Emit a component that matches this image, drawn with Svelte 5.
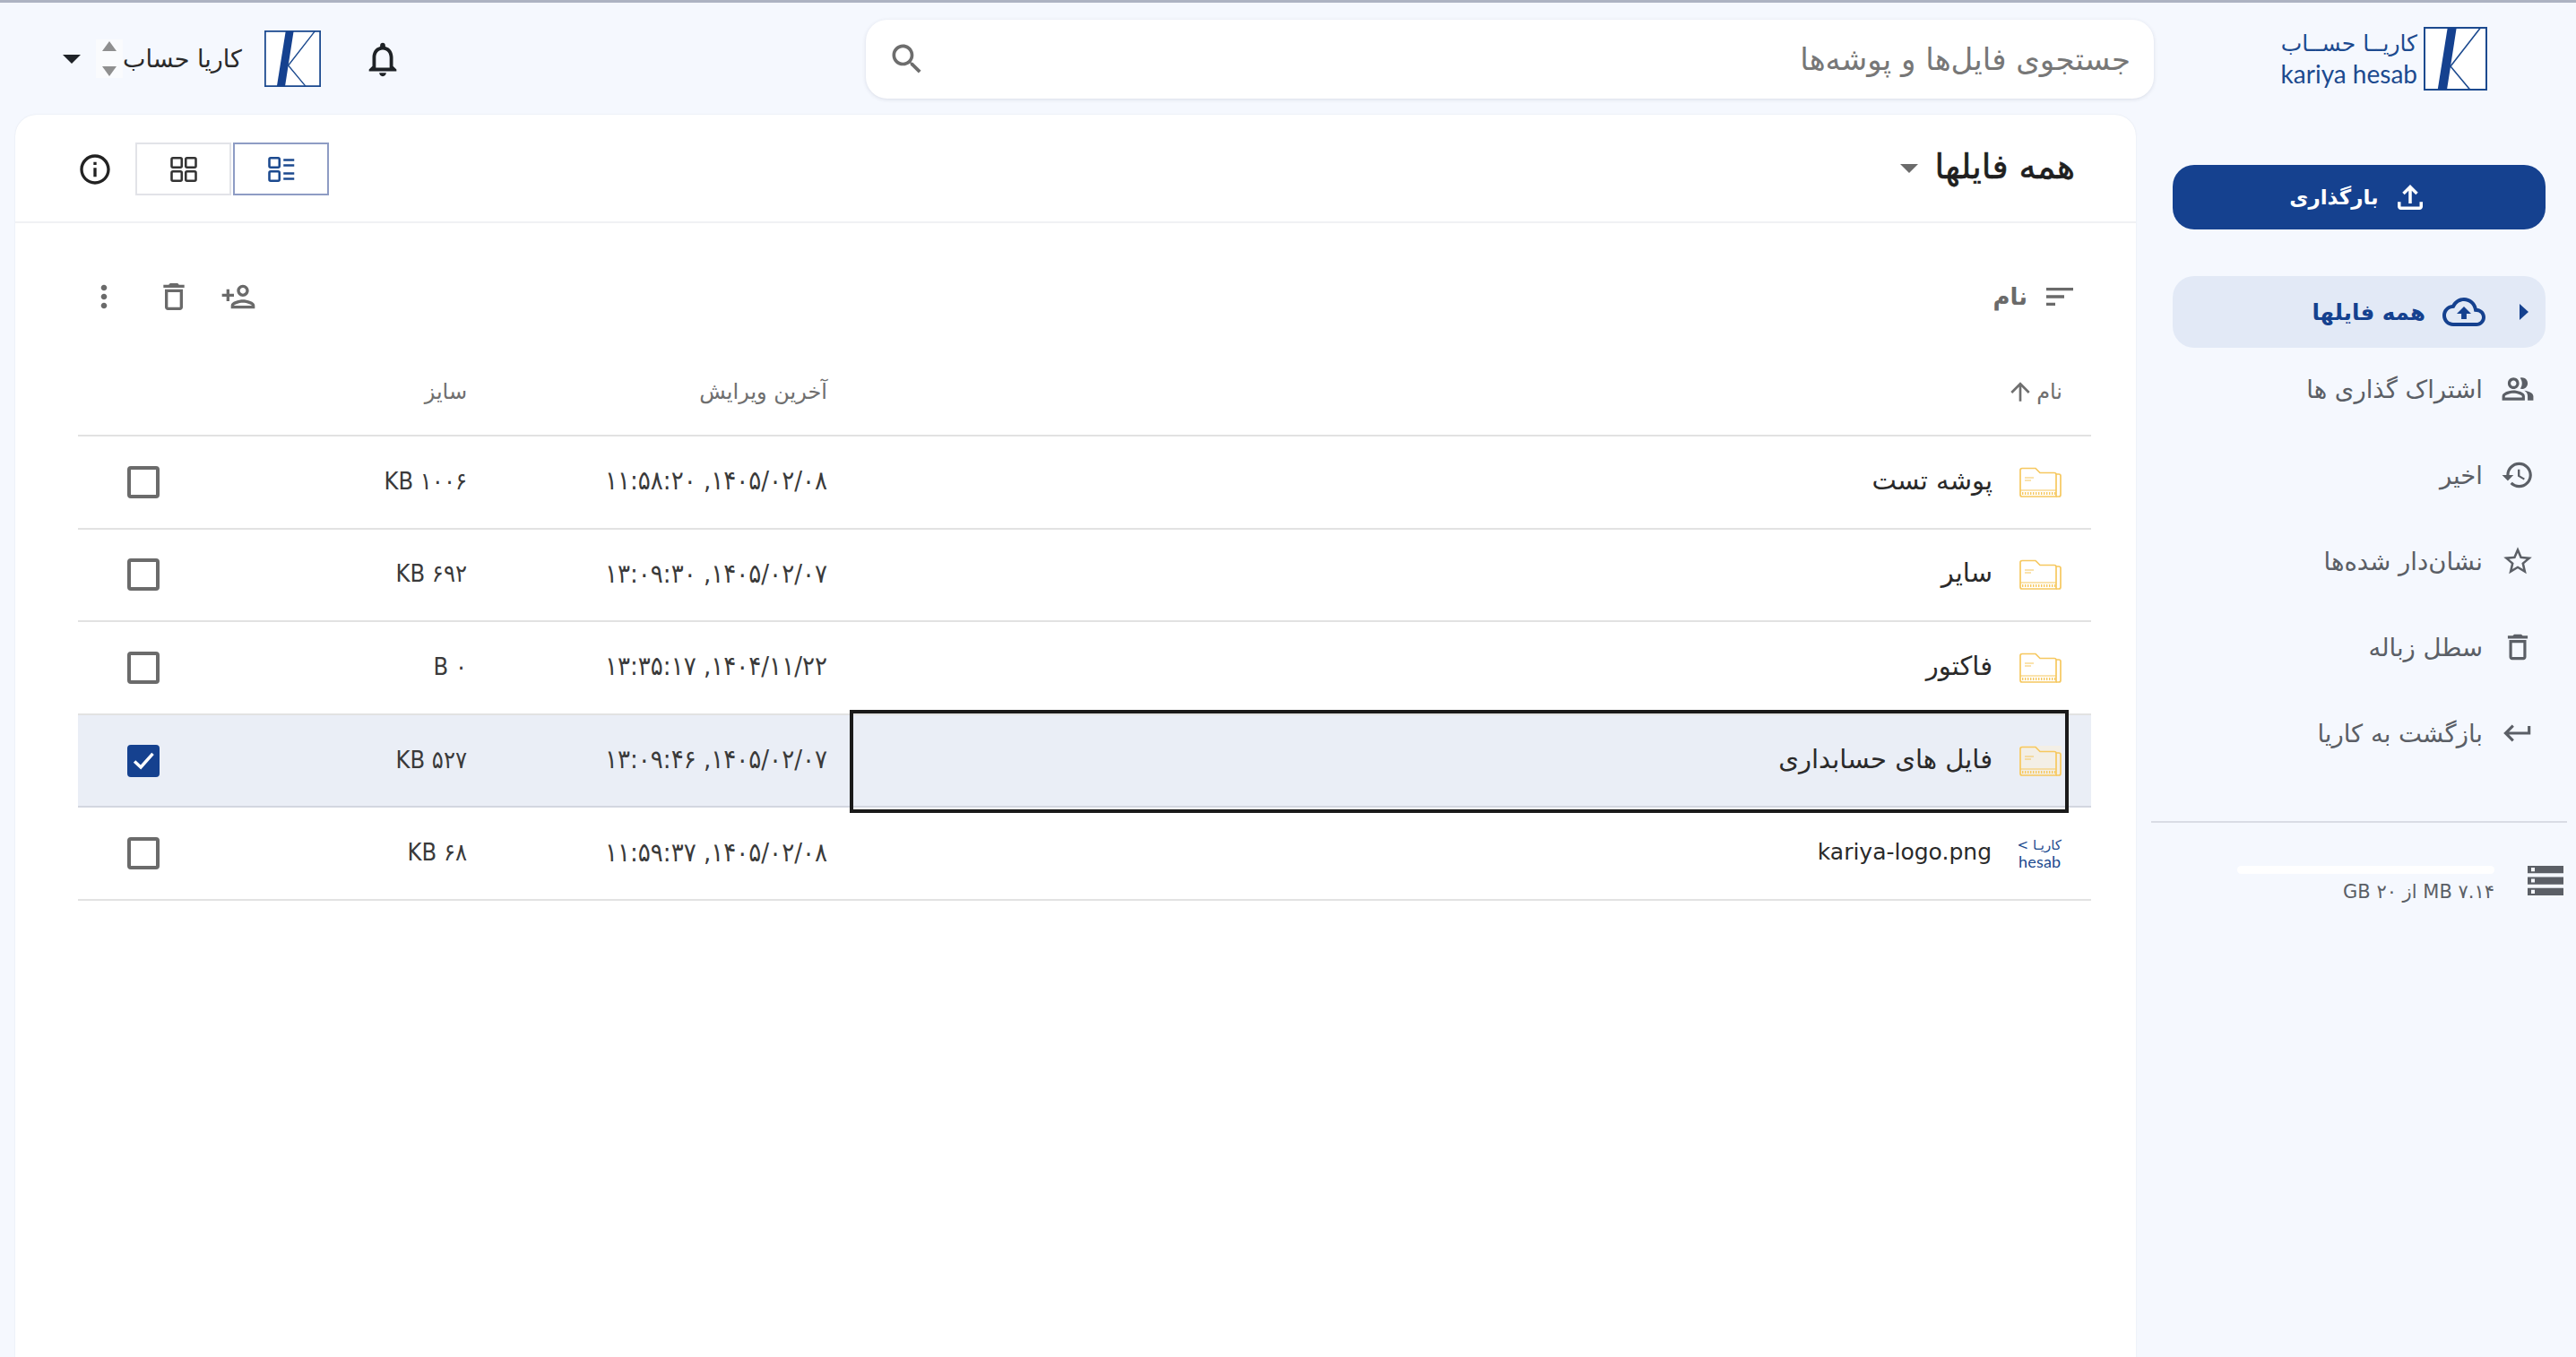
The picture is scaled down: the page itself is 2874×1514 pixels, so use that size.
<script>
  // material icon paths
  const icons = {
    upload: "M18 15v3H6v-3H4v3c0 1.1.9 2 2 2h12c1.1 0 2-.9 2-2v-3h-2zM7 9l1.41 1.41L11 7.83V16h2V7.83l2.59 2.58L17 9l-5-5-5 5z",
    cloud: "M19.35 10.04C18.67 6.59 15.64 4 12 4 9.11 4 6.6 5.64 5.35 8.04 2.34 8.36 0 10.91 0 14c0 3.31 2.69 6 6 6h13c2.76 0 5-2.24 5-5 0-2.64-2.05-4.78-4.65-4.96zM19 18H6c-2.21 0-4-1.79-4-4 0-2.05 1.53-3.76 3.56-3.97l1.07-.11.5-.95C8.08 7.14 9.94 6 12 6c2.62 0 4.88 1.86 5.39 4.43l.3 1.5 1.53.11c1.56.1 2.78 1.41 2.78 2.96 0 1.65-1.35 3-3 3zM8 13h2.55v3h2.9v-3H16l-4-4z",
    people: "M16.67 13.13C18.04 14.06 19 15.32 19 17v3h4v-3c0-2.18-3.57-3.47-6.33-3.87zM15 12c2.21 0 4-1.79 4-4s-1.79-4-4-4c-.47 0-.91.1-1.33.24C14.5 5.27 15 6.58 15 8s-.5 2.73-1.33 3.76c.42.14.86.24 1.33.24zM9 12c2.21 0 4-1.79 4-4s-1.79-4-4-4-4 1.79-4 4 1.79 4 4 4zm0-6c1.1 0 2 .9 2 2s-.9 2-2 2-2-.9-2-2 .9-2 2-2zM9 13c-2.67 0-8 1.34-8 4v3h16v-3c0-2.66-5.33-4-8-4zm6 5H3v-.99C3.2 16.29 6.3 15 9 15s5.8 1.29 6 2v1z",
    history: "M13 3c-4.97 0-9 4.03-9 9H1l3.89 3.89.07.14L9 12H6c0-3.87 3.13-7 7-7s7 3.13 7 7-3.13 7-7 7c-1.93 0-3.68-.79-4.94-2.06l-1.42 1.42C8.27 19.99 10.51 21 13 21c4.97 0 9-4.03 9-9s-4.03-9-9-9zm-1 5v5l4.28 2.54.72-1.21-3.5-2.08V8H12z",
    star: "M22 9.24l-7.19-.62L12 2 9.19 8.63 2 9.24l5.46 4.73L5.82 21 12 17.27 18.18 21l-1.63-7.03L22 9.24zM12 15.4l-3.76 2.27 1-4.28-3.32-2.88 4.38-.38L12 6.1l1.71 4.04 4.38.38-3.32 2.88 1 4.28L12 15.4z",
    trash: "M6 19c0 1.1.9 2 2 2h8c1.1 0 2-.9 2-2V7H6v12zM8 9h8v10H8V9zm7.5-5l-1-1h-5l-1 1H5v2h14V4h-3.5z",
    back: "M19 7v4H5.83l3.58-3.59L8 6l-6 6 6 6 1.41-1.41L5.83 13H21V7z",
    storage: "M2 20h20v-4H2v4zm2-3h2v2H4v-2zM2 4v4h20V4H2zm4 3H4V5h2v2zm-4 7h20v-4H2v4zm2-3h2v2H4v-2z",
    bell: "M12 22c1.1 0 2-.9 2-2h-4c0 1.1.9 2 2 2zm6-6v-5c0-3.07-1.63-5.64-4.5-6.32V4c0-.83-.67-1.5-1.5-1.5s-1.5.67-1.5 1.5v.68C7.64 5.36 6 7.92 6 11v5l-2 2v1h16v-1l-2-2zm-2 1H8v-6c0-2.48 1.51-4.5 4-4.5s4 2.02 4 4.5v6z",
    search: "M15.5 14h-.79l-.28-.27C15.41 12.59 16 11.11 16 9.5 16 5.91 13.09 3 9.5 3S3 5.91 3 9.5 5.91 16 9.5 16c1.61 0 3.09-.59 4.23-1.57l.27.28v.79l5 4.99L20.49 19l-4.99-5zm-6 0C7.01 14 5 11.99 5 9.5S7.01 5 9.5 5 14 7.01 14 9.5 11.99 14 9.5 14z",
    info: "M11 7h2v2h-2zm0 4h2v6h-2zm1-9C6.48 2 2 6.48 2 12s4.48 10 10 10 10-4.48 10-10S17.52 2 12 2zm0 18c-4.41 0-8-3.59-8-8s3.59-8 8-8 8 3.59 8 8-3.59 8-8 8z",
    personAdd: "M15 12c2.21 0 4-1.79 4-4s-1.79-4-4-4-4 1.79-4 4 1.79 4 4 4zm0-6c1.1 0 2 .9 2 2s-.9 2-2 2-2-.9-2-2 .9-2 2-2zm0 8c-2.67 0-8 1.34-8 4v2h16v-2c0-2.66-5.33-4-8-4zm-6 4c.22-.72 3.31-2 6-2 2.7 0 5.8 1.29 6 2H9zm-3-3v-3h3v-2H6V7H4v3H1v2h3v3z",
    more: "M12 8c1.1 0 2-.9 2-2s-.9-2-2-2-2 .9-2 2 .9 2 2 2zm0 2c-1.1 0-2 .9-2 2s.9 2 2 2 2-.9 2-2-.9-2-2-2zm0 6c-1.1 0-2 .9-2 2s.9 2 2 2 2-.9 2-2-.9-2-2-2z",
    arrowUp: "M4 12l1.41 1.41L11 7.83V20h2V7.83l5.58 5.59L20 12l-8-8-8 8z",
    sort: "M3 6v2h18V6H3zm0 7h12v-2H3v2zm0 5h6v-2H3v2z"
  };

  const navItems = [
    { label: "اشتراک گذاری ها", icon: "people" },
    { label: "اخیر", icon: "history" },
    { label: "نشان‌دار شده‌ها", icon: "star" },
    { label: "سطل زباله", icon: "trash" },
    { label: "بازگشت به کاریا", icon: "back" }
  ];

  const files = [
    { name: "پوشه تست", date: "۱۴۰۵/۰۲/۰۸, ۱۱:۵۸:۲۰", size: "۱۰۰۶ KB" },
    { name: "سایر", date: "۱۴۰۵/۰۲/۰۷, ۱۳:۰۹:۳۰", size: "۶۹۲ KB" },
    { name: "فاکتور", date: "۱۴۰۴/۱۱/۲۲, ۱۳:۳۵:۱۷", size: "۰ B" },
    { name: "فایل های حسابداری", date: "۱۴۰۵/۰۲/۰۷, ۱۳:۰۹:۴۶", size: "۵۲۷ KB", selected: true },
    { name: "kariya-logo.png", date: "۱۴۰۵/۰۲/۰۸, ۱۱:۵۹:۳۷", size: "۶۸ KB", image: true }
  ];
</script>

{#snippet icon(name, size, cls = "")}
  <svg class={cls} width={size} height={size} viewBox="0 0 24 24" fill="currentColor" aria-hidden="true"><path d={icons[name]} /></svg>
{/snippet}

{#snippet logoMark()}
  <svg class="mark" viewBox="0 0 71 71" aria-hidden="true">
    <rect x="1" y="1" width="69" height="69" fill="#fff" stroke="#1c4a8f" stroke-width="2" />
    <polygon points="26.7,1 36.7,1 26,70 15.7,70" fill="#15418f" />
    <polyline points="63.4,1 30,44 51.7,70" fill="none" stroke="#1c4a8f" stroke-width="1.6" />
  </svg>
{/snippet}

<div class="page" dir="rtl">
  <header class="top">
    <div class="brand">
      {@render logoMark()}
      <div class="brand-text">
        <span class="fa">کاریــا حســاب</span>
        <span class="en" dir="ltr">kariya hesab</span>
      </div>
    </div>

    <div class="search">
      <span class="placeholder">جستجوی فایل‌ها و پوشه‌ها</span>
      {@render icon("search", 44)}
    </div>

    <div class="user">
      <span class="bell">{@render icon("bell", 46)}</span>
      <span class="avatar">{@render logoMark()}</span>
      <span class="account">کاریا حساب</span>
      <span class="spinner"><i class="up"></i><i class="down"></i></span>
      <i class="caret dark"></i>
    </div>
  </header>

  <div class="body">
    <aside class="side">
      <button class="upload">
        {@render icon("upload", 42)}
        <span>بارگذاری</span>
      </button>

      <nav>
        <div class="nav-active">
          <i class="tri"></i>
          {@render icon("cloud", 48)}
          <span>همه فایلها</span>
        </div>
        {#each navItems as item}
          <div class="nav-item">
            {@render icon(item.icon, 38)}
            <span>{item.label}</span>
          </div>
        {/each}
      </nav>

      <hr />

      <div class="quota">
        <svg class="storage" viewBox="2 4 20 16" preserveAspectRatio="none" fill="currentColor" aria-hidden="true"><path d={icons.storage} /></svg>
        <div class="quota-info">
          <div class="quota-bar"></div>
          <div class="quota-text">۷.۱۴ MB از ۲۰ GB</div>
        </div>
      </div>
    </aside>

    <main class="card">
      <div class="card-head">
        <div class="title-wrap">
          <h1>همه فایلها</h1>
          <i class="caret grey"></i>
        </div>
        <div class="view-tools">
          <div class="toggle active">
            <svg width="36" height="36" viewBox="0 0 24 24" fill="none" stroke="currentColor" stroke-width="1.7" aria-hidden="true">
              <rect x="3" y="3.5" width="7.5" height="7" rx="1" /><rect x="3" y="13.5" width="7.5" height="7" rx="1" />
              <path d="M13.5 5h8M13.5 9h8M13.5 15h8M13.5 19h8" />
            </svg>
          </div>
          <div class="toggle">
            <svg width="36" height="36" viewBox="0 0 24 24" fill="none" stroke="currentColor" stroke-width="1.7" aria-hidden="true">
              <rect x="3" y="3.5" width="7.5" height="7" rx="1" /><rect x="13.5" y="3.5" width="7.5" height="7" rx="1" />
              <rect x="3" y="13.5" width="7.5" height="7" rx="1" /><rect x="13.5" y="13.5" width="7.5" height="7" rx="1" />
            </svg>
          </div>
          {@render icon("info", 40, "info")}
        </div>
      </div>

      <div class="toolbar">
        <div class="sort-by">
          {@render icon("sort", 40)}
          <span>نام</span>
        </div>
        <div class="actions">
          {@render icon("personAdd", 40)}
          {@render icon("trash", 40)}
          {@render icon("more", 40, "more-ic")}
        </div>
      </div>

      <div class="table">
        <div class="row head">
          <div class="cell name"><span>نام</span>{@render icon("arrowUp", 32)}</div>
          <div class="cell date">آخرین ویرایش</div>
          <div class="cell size">سایز</div>
          <div></div>
        </div>
        {#each files as file}
          <div class="row" class:selected={file.selected}>
            <div class="cell name" class:focused={file.selected}>
              {#if file.image}
                <div class="thumb" dir="ltr"><span class="th-fa" dir="rtl">کاریـا &gt;</span><span class="th-en">hesab</span></div>
              {:else}
                <svg class="folder" viewBox="0 0 47 34" fill="none" stroke="#f6c85f" stroke-width="1.7" aria-hidden="true">
                  <path d="M1 3.5a2 2 0 0 1 2-2h15l5 5h16a2 2 0 0 1 2 2V33H3a2 2 0 0 1-2-2z" />
                  <path d="M41 8h3a2 2 0 0 1 2 2v21a2 2 0 0 1-2 2h-3" />
                  <path d="M1 26h40M6 12h10M6 15h7" stroke-width="1.2" />
                  <path d="M3 29.5h37" stroke-width="3" stroke-dasharray="1.4 1.6" />
                </svg>
              {/if}
              <span class="file-name" class:latin={file.image} dir="auto">{file.name}</span>
            </div>
            <div class="cell date">{file.date}</div>
            <div class="cell size">{file.size}</div>
            <div class="cell pick">
              <span class="box" class:checked={file.selected}>
                {#if file.selected}
                  <svg width="34" height="34" viewBox="0 0 24 24" fill="none" stroke="#fff" stroke-width="3" aria-hidden="true"><path d="M3.5 12.5 9.5 18 21 5" /></svg>
                {/if}
              </span>
            </div>
          </div>
        {/each}
      </div>
    </main>
  </div>
</div>

<style>
  :global(body) {
    margin: 0;
    background: #f5f8fe;
  }

  .page {
    width: 2874px;
    height: 1514px;
    overflow: hidden;
    display: flex;
    flex-direction: column;
    background: #f5f8fe;
    border-top: 3px solid #adb3c2;
    box-sizing: border-box;
    font-family: "DejaVu Sans", "Noto Sans", sans-serif;
    color: #1f1f1f;
  }

  .top {
    display: flex;
    align-items: center;
    height: 125px;
    flex: none;
  }

  .brand {
    width: 471px;
    flex: none;
    box-sizing: border-box;
    padding-right: 99px;
    display: flex;
    align-items: center;
    gap: 7px;
    color: #1c4a8f;
  }

  .mark {
    width: 71px;
    height: 71px;
    display: block;
  }

  .brand-text {
    display: flex;
    flex-direction: column;
    width: 154px;
    line-height: 1;
    gap: 7px;
  }

  .brand-text .fa {
    font-size: 25px;
    white-space: nowrap;
  }

  .brand-text .en {
    font-family: Lato, sans-serif;
    font-size: 28px;
    text-align: right;
    white-space: nowrap;
  }

  .search {
    width: 1437px;
    height: 88px;
    flex: none;
    box-sizing: border-box;
    display: flex;
    align-items: center;
    justify-content: space-between;
    padding: 0 26px 0 24px;
    background: #fff;
    border-radius: 24px;
    box-shadow: 0 1px 4px rgba(60, 70, 100, 0.15);
    color: #6d6d6d;
  }

  .placeholder {
    font-size: 34px;
    color: #777;
  }

  .user {
    flex: 1;
    display: flex;
    align-items: center;
    padding-left: 70px;
    justify-content: flex-end;
  }

  .bell {
    color: #1e2226;
    display: flex;
    margin-left: 46px;
  }

  .avatar {
    width: 63px;
    height: 63px;
    margin-left: 25px;
    display: block;
  }

  .avatar .mark {
    width: 63px;
    height: 63px;
  }

  .account {
    font-size: 27px;
    color: #2a2a2a;
    white-space: nowrap;
  }

  .spinner {
    width: 30px;
    height: 39px;
    margin-left: 17px;
    display: flex;
    flex-direction: column;
    align-items: center;
    justify-content: space-between;
    background: #fafbfd;
    padding: 2px 0;
  }

  .up {
    border-left: 8px solid transparent;
    border-right: 8px solid transparent;
    border-bottom: 11px solid #8f8f8f;
  }

  .down {
    border-left: 8px solid transparent;
    border-right: 8px solid transparent;
    border-top: 11px solid #8f8f8f;
  }

  .caret {
    display: block;
    width: 0;
    height: 0;
    border-left: 10px solid transparent;
    border-right: 10px solid transparent;
    border-top: 10px solid #1f2328;
  }

  .caret.grey {
    border-top-color: #6b6b6b;
  }

  .body {
    flex: 1;
    display: flex;
    min-height: 0;
  }

  .side {
    width: 491px;
    flex: none;
    box-sizing: border-box;
    padding: 56px 34px 0 10px;
  }

  .upload {
    width: 416px;
    margin-left: 31px;
    height: 72px;
    border: 0;
    border-radius: 24px;
    background: #15418f;
    color: #fff;
    font: bold 23px "DejaVu Sans", sans-serif;
    display: flex;
    align-items: center;
    justify-content: center;
    gap: 14px;
  }

  nav {
    margin-top: 52px;
  }

  .nav-active {
    width: 416px;
    margin-left: 31px;
    height: 80px;
    box-sizing: border-box;
    border-radius: 24px;
    background: #e2e9f6;
    color: #15418f;
    display: flex;
    align-items: center;
    padding-right: 19px;
    font-size: 24.5px;
    font-weight: bold;
    gap: 19px;
  }

  .tri {
    display: block;
    width: 0;
    height: 0;
    border-top: 9px solid transparent;
    border-bottom: 9px solid transparent;
    border-left: 10px solid #15418f;
    margin-left: 19px;
  }

  .nav-item {
    height: 96px;
    display: flex;
    align-items: center;
    gap: 20px;
    padding-right: 12px;
    font-size: 27.5px;
    color: #5b5f66;
  }

  .nav-active + .nav-item {
    margin-top: -2px;
  }

  .side hr {
    border: 0;
    height: 2px;
    background: #d9dce5;
    margin: 50px -24px 0 0;
    width: 464px;
  }

  .quota {
    display: flex;
    align-items: flex-start;
    margin-top: 48px;
    gap: 37px;
    margin-right: -20px;
    color: #5b5f66;
  }

  .storage {
    width: 40px;
    height: 33px;
    flex: none;
  }

  .quota-bar {
    width: 287px;
    height: 9px;
    border-radius: 5px;
    background: #fff;
  }

  .quota-text {
    margin-top: 8px;
    font-size: 21px;
    color: #5b5f66;
  }

  .card {
    flex: 1;
    margin-left: 17px;
    background: #fff;
    border-radius: 24px 24px 0 0;
    box-shadow: 0 0 2px rgba(60, 70, 100, 0.12);
    min-width: 0;
  }

  .card-head {
    height: 121px;
    box-sizing: border-box;
    border-bottom: 2px solid #f0f1f4;
    display: flex;
    align-items: center;
    justify-content: space-between;
    padding: 0 68px 0 69px;
  }

  .title-wrap {
    display: flex;
    align-items: center;
    gap: 19px;
  }

  h1 {
    margin: 0 0 3px;
    font-size: 38px;
    font-weight: 400;
    -webkit-text-stroke: 0.6px #1f1f1f;
    line-height: 1;
  }

  .view-tools {
    display: flex;
    align-items: center;
    margin-top: 2px;
  }

  .toggle {
    width: 107px;
    height: 59px;
    box-sizing: border-box;
    border: 2px solid #e2e3e8;
    display: flex;
    align-items: center;
    justify-content: center;
    color: #333;
  }

  .toggle.active {
    border-color: #8e9cc4;
    color: #1c4a8f;
    margin-left: 2px;
  }

  .view-tools :global(.info) {
    margin-right: 25px;
    color: #222;
  }

  .toolbar {
    height: 150px;
    box-sizing: border-box;
    padding: 14px 65px 0 79px;
    display: flex;
    align-items: center;
    justify-content: space-between;
    color: #6a6a6a;
  }

  .sort-by {
    display: flex;
    align-items: center;
    gap: 16px;
    font-size: 26px;
    font-weight: bold;
  }

  .actions {
    display: flex;
    gap: 32px;
  }

  .actions :global(.more-ic) {
    margin-right: 6px;
  }

  .table {
    margin: 0 50px 0 70px;
  }

  .row {
    display: grid;
    grid-template-columns: 1385px 427px 288px 146px;
    height: 103.6px;
    border-bottom: 2px solid #e2e2e2;
    box-sizing: border-box;
    align-items: center;
    font-size: 24px;
  }

  .row.head {
    height: 88px;
    padding-bottom: 10px;
    font-size: 24px;
    color: #6f6f6f;
  }

  .row.selected {
    background: #eaeef6;
    border-bottom-color: #d3d6e0;
  }

  .cell {
    min-width: 0;
  }

  .name {
    position: relative;
    display: flex;
    align-items: center;
    height: 100%;
    padding-right: 33px;
    gap: 30px;
  }

  .head .name {
    gap: 2px;
    padding-right: 32px;
  }

  .focused::after {
    content: "";
    position: absolute;
    inset: -6px 25px -8px 0;
    border: 4px solid #1a1a1a;
    pointer-events: none;
  }

  .folder {
    width: 47px;
    height: 34px;
    flex: none;
  }

  .selected .folder {
    background: #f3efe6;
  }

  .thumb {
    width: 48px;
    height: 36px;
    flex: none;
    display: flex;
    flex-direction: column;
    color: #1c4a8f;
    font-size: 15px;
    line-height: 18px;
    white-space: nowrap;
  }

  .th-en {
    font-family: Lato, sans-serif;
    font-size: 18px;
    letter-spacing: 0.2px;
  }

  .file-name {
    color: #2a2a2a;
    font-size: 29px;
    line-height: 1;
    margin-bottom: 3px;
  }

  .file-name.latin {
    font-size: 25px;
  }

  .date {
    padding-right: 25px;
    padding-bottom: 3px;
    font-family: "DejaVu Sans Condensed", "DejaVu Sans", sans-serif;
    font-size: 29px;
    letter-spacing: 1.2px;
    color: #3a3a3a;
  }

  .row .size {
    padding-bottom: 3px;
    font-family: "DejaVu Sans Condensed", "DejaVu Sans", sans-serif;
    font-size: 27px;
    color: #3a3a3a;
  }

  .row.head .date,
  .row.head .size {
    padding-bottom: 0;
    font-family: "DejaVu Sans", sans-serif;
    font-size: 24px;
    letter-spacing: 0;
    color: #6f6f6f;
  }

  .pick {
    display: flex;
    justify-content: center;
  }

  .box {
    width: 36px;
    height: 36px;
    box-sizing: border-box;
    border: 4px solid #6b6b6b;
    border-radius: 4px;
    display: flex;
    align-items: center;
    justify-content: center;
  }

  .box.checked {
    background: #15418f;
    border-color: #15418f;
  }
</style>
